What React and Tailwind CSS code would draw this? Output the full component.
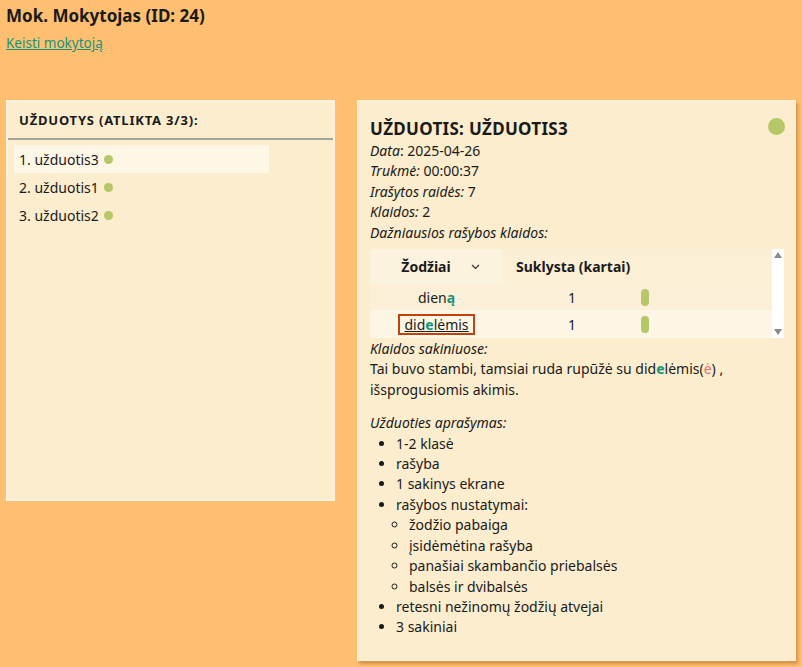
import React from 'react';

const tasks = [
    { id: 1, name: 'užduotis3', active: true },
    { id: 2, name: 'užduotis1' },
    { id: 3, name: 'užduotis2' },
];

const Dot = () => <span className="inline-block w-[9px] h-[9px] rounded-full bg-[#b5c766] ml-[5px] align-[0px]" />;

const App = () => {
    return (
        <div className="min-h-[667px] bg-[#ffbf70] text-[#1a1a1a] text-[14px] font-['Noto_Sans',sans-serif] px-[6px] pt-[4px]">
            <h1 className="text-[17px] font-bold leading-[24px]">Mok. Mokytojas (ID: 24)</h1>
            <a href="#" className="inline-block mt-[5px] text-[#13957b] underline leading-[20px] text-[13.5px]">Keisti mokytoją</a>

            <div className="flex gap-[22px] mt-[47px] items-start">
                {/* left list */}
                <div className="w-[330px] h-[401px] bg-[#fbedcd] border-2 border-[#fdf3df]">
                    <div className="px-[11px] pt-[8px] pb-[8px] text-[13px] font-bold tracking-[0.8px] leading-[20px] border-b-2 border-[#a3a699]">
                        UŽDUOTYS (ATLIKTA 3/3):
                    </div>
                    <ul className="px-[6px] pt-[5px]">
                        {tasks.map(t => (
                            <li key={t.id} className={`w-[255px] h-[28px] flex items-center px-[5px] ${t.active ? 'bg-[#fff7e6]' : ''}`}>
                                {t.id}. {t.name} <Dot />
                            </li>
                        ))}
                    </ul>
                </div>

                {/* right details */}
                <div className="w-[439px] h-[561px] bg-[#fbedcd] border border-[#fff3dd] shadow-[2px_3px_3px_rgba(180,110,40,0.55)] px-[12px] pt-[16px]">
                    <div className="flex justify-between items-start">
                        <h2 className="text-[17px] font-bold tracking-[0.3px] leading-[24px]">UŽDUOTIS: UŽDUOTIS3</h2>
                        <span className="w-[17px] h-[17px] rounded-full bg-[#b5c766] mt-[1px] mr-[-2px]" />
                    </div>
                    <div className="leading-[20.4px]">
                        <p><i>Data</i>: 2025-04-26</p>
                        <p><i>Trukmė:</i> 00:00:37</p>
                        <p><i>Irašytos raidės:</i> 7</p>
                        <p><i>Klaidos:</i> 2</p>
                        <p><i>Dažniausios rašybos klaidos:</i></p>
                    </div>

                    <div className="mt-[6px] w-[414px] h-[89px] flex bg-[#fcf2dc]">
                        <table className="flex-1 border-collapse">
                            <thead>
                                <tr className="h-[35px] font-bold">
                                    <th className="w-[133px] bg-[#fcf3df] font-bold">
                                        <span className="inline-flex items-center gap-[20px] pl-[8px]">Žodžiai
                                            <svg width="9" height="6" viewBox="0 0 9 6" fill="none" stroke="#333" strokeWidth="1.2"><path d="M1 1l3.5 3.5L8 1" /></svg>
                                        </span>
                                    </th>
                                    <th className="bg-[#fbefd5] text-left pl-[13px] font-bold">Suklysta (kartai)</th>
                                </tr>
                            </thead>
                            <tbody>
                                <tr className="h-[26px] bg-[#fbf0d7]">
                                    <td className="text-center">dien<span className="text-[#13957b] font-bold">ą</span></td>
                                    <td>
                                        <div className="flex items-center">
                                            <span className="w-[138px] text-center">1</span>
                                            <span className="w-[8px] h-[17px] rounded-full bg-[#b5c766]" />
                                        </div>
                                    </td>
                                </tr>
                                <tr className="h-[28px] bg-[#fdf6e5]">
                                    <td className="text-center">
                                        <span className="inline-block border-2 border-[#c2410c] px-[4px] leading-[17px] underline">did<span className="text-[#13957b] font-bold">e</span>lėmis</span>
                                    </td>
                                    <td>
                                        <div className="flex items-center">
                                            <span className="w-[138px] text-center">1</span>
                                            <span className="w-[8px] h-[17px] rounded-full bg-[#b5c766]" />
                                        </div>
                                    </td>
                                </tr>
                            </tbody>
                        </table>
                        <div className="w-[12px] bg-white flex flex-col justify-between items-center py-[3px]">
                            <svg width="8" height="6" viewBox="0 0 8 6"><path d="M4 0L8 6H0z" fill="#8a8a8a" /></svg>
                            <svg width="8" height="6" viewBox="0 0 8 6"><path d="M0 0h8L4 6z" fill="#8a8a8a" /></svg>
                        </div>
                    </div>

                    <div className="leading-[20.4px] mt-[1px]">
                        <p><i>Klaidos sakiniuose:</i></p>
                        <p>Tai buvo stambi, tamsiai ruda rupūžė su did<span className="text-[#13957b] font-bold">e</span>lėmis(<span className="text-[#e07070]">ė</span>) , išsprogusiomis akimis.</p>
                        <p className="mt-[13px]"><i>Užduoties aprašymas:</i></p>
                        <ul className="list-disc pl-[26px]">
                            <li>1-2 klasė</li>
                            <li>rašyba</li>
                            <li>1 sakinys ekrane</li>
                            <li>rašybos nustatymai:
                                <ul className="list-[circle] pl-[13px]">
                                    <li>žodžio pabaiga</li>
                                    <li>įsidėmėtina rašyba</li>
                                    <li>panašiai skambančio priebalsės</li>
                                    <li>balsės ir dvibalsės</li>
                                </ul>
                            </li>
                            <li>retesni nežinomų žodžių atvejai</li>
                            <li>3 sakiniai</li>
                        </ul>
                    </div>
                </div>
            </div>
        </div>
    );
};

export default App;
